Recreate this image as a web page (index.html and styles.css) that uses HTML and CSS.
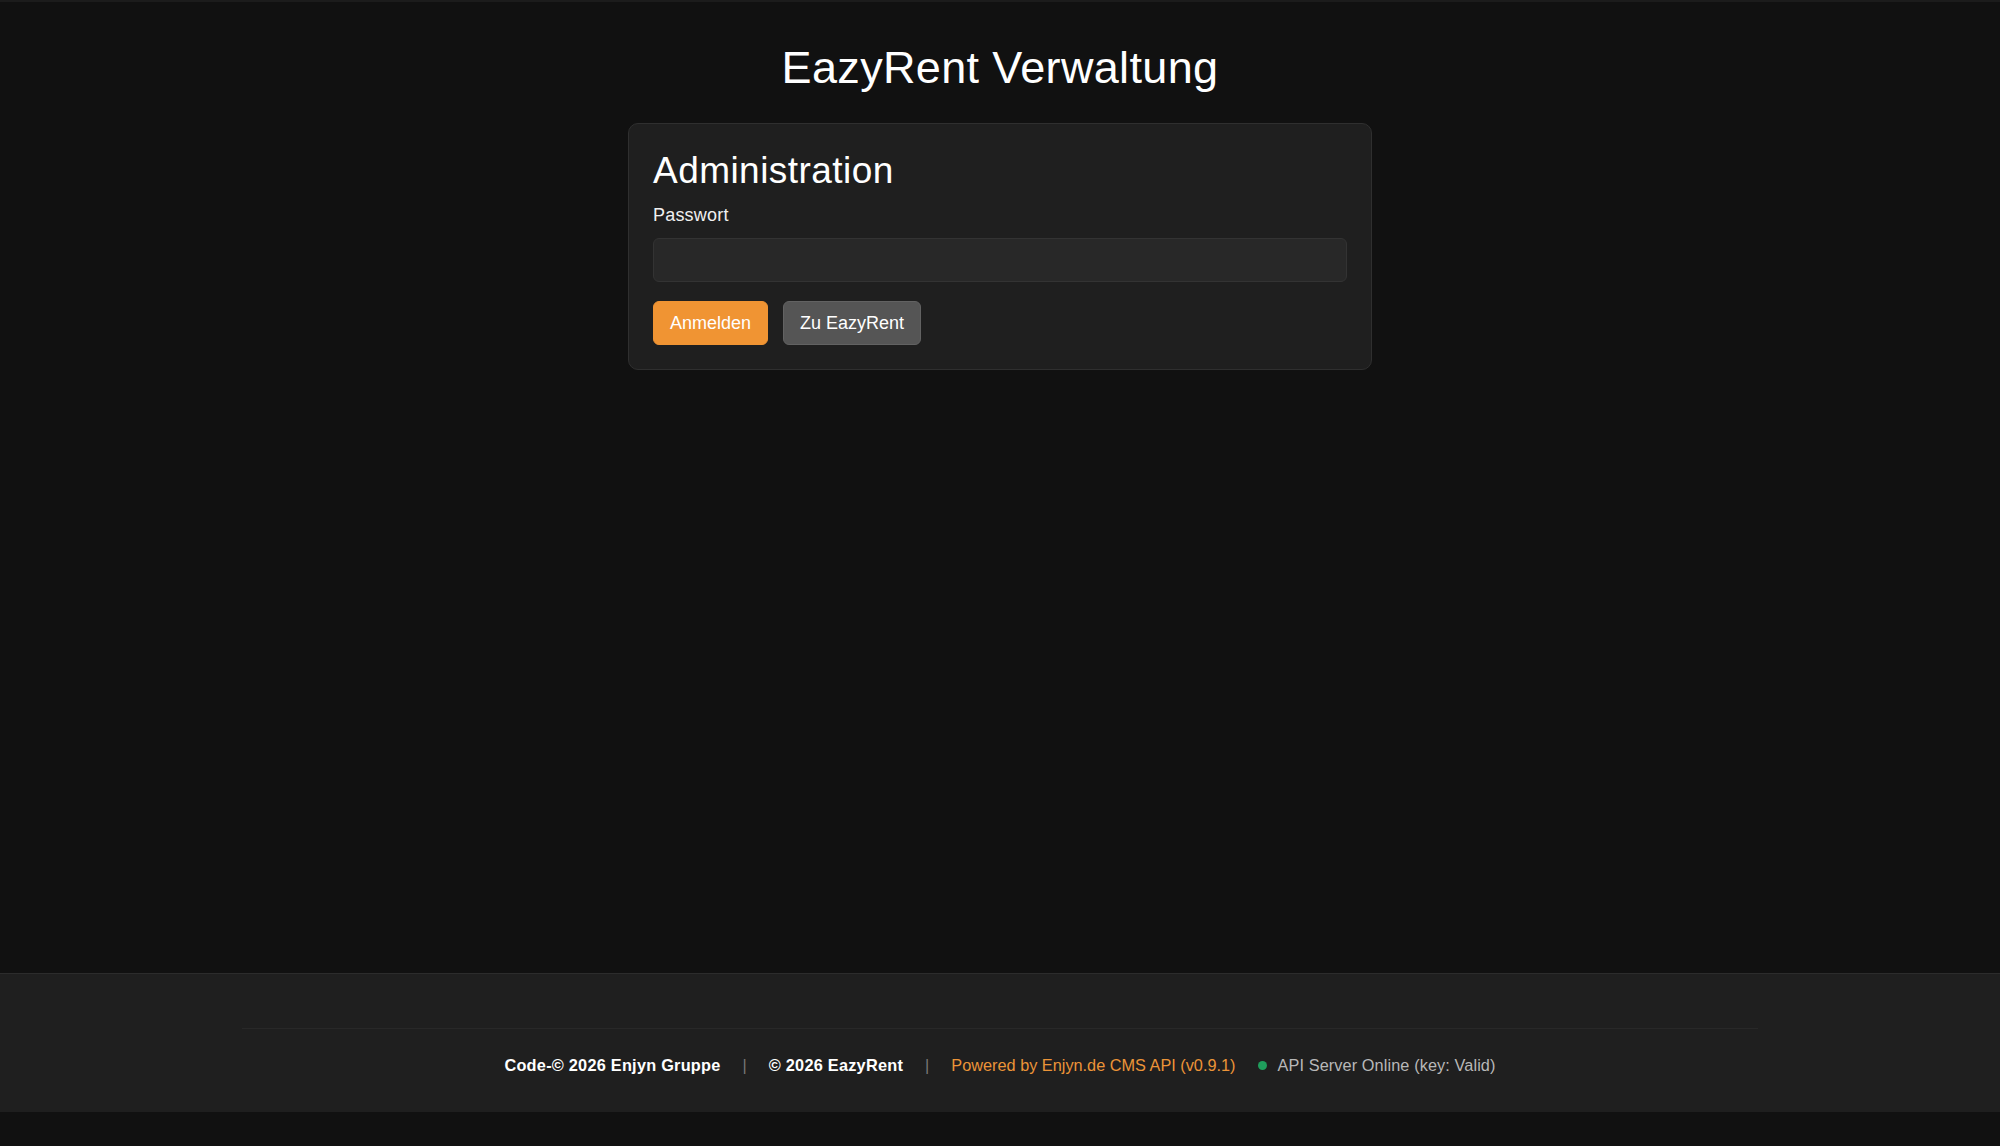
FILE: index.html
```html
<!DOCTYPE html>
<html lang="de">
<head>
<meta charset="utf-8">
<title>EazyRent Verwaltung</title>
<link rel="stylesheet" href="styles.css">
</head>
<body>
<div class="topstrip"></div>
<main class="main">
  <h1 class="title">EazyRent Verwaltung</h1>
  <section class="card">
    <h2 class="card-title">Administration</h2>
    <label class="label" for="pw">Passwort</label>
    <input class="input" id="pw" type="password">
    <div class="actions">
      <button class="btn btn-primary">Anmelden</button>
      <button class="btn btn-secondary">Zu EazyRent</button>
    </div>
  </section>
</main>
<footer class="footer">
  <div class="footer-inner">
    <span class="f-strong">Code-© 2026 Enjyn Gruppe</span>
    <span class="f-sep">|</span>
    <span class="f-strong">© 2026 EazyRent</span>
    <span class="f-sep">|</span>
    <span class="f-accent">Powered by Enjyn.de CMS API (v0.9.1)</span>
    <span class="f-status"><span class="dot"></span>API Server Online (key: Valid)</span>
  </div>
</footer>
</body>
</html>
```
FILE: styles.css
```css
html, body {
  margin: 0;
  padding: 0;
  background: #111111;
}
body {
  font-family: "Liberation Sans", Arial, sans-serif;
  font-size: 18px;
  color: #f2f2f2;
}
.topstrip {
  height: 2px;
  background: #1c1c1c;
}
.main {
  min-height: 971px;
  padding-top: 40px;
  box-sizing: border-box;
}
.title {
  margin: 0;
  font-size: 45px;
  line-height: 52px;
  font-weight: 400;
  letter-spacing: 0.35px;
  text-align: center;
  color: #ffffff;
}
.card {
  width: 744px;
  box-sizing: border-box;
  margin: 29px auto 0;
  padding: 25px 24px 24px;
  background: #1f1f1f;
  border: 1px solid #2f2f2f;
  border-radius: 10px;
}
.card-title {
  margin: 0;
  font-size: 37px;
  line-height: 44px;
  font-weight: 400;
  letter-spacing: 0.45px;
  color: #ffffff;
}
.label {
  display: block;
  margin-top: 11px;
  font-size: 18px;
  line-height: 22px;
  letter-spacing: 0.2px;
  color: #f0f0f0;
}
.input {
  display: block;
  width: 100%;
  height: 44px;
  box-sizing: border-box;
  margin-top: 12px;
  background: #282828;
  border: 1px solid #333333;
  border-radius: 6px;
  color: #eeeeee;
  font: inherit;
  padding: 0 12px;
  outline: none;
}
.actions {
  display: flex;
  gap: 15px;
  margin-top: 19px;
}
.btn {
  height: 44px;
  padding: 0 16px;
  font-family: inherit;
  font-size: 18px;
  border-radius: 6px;
  color: #ffffff;
  cursor: pointer;
}
.btn-primary {
  background: #f09433;
  border: 1px solid #f09433;
}
.btn-secondary {
  background: #555555;
  border: 1px solid #626262;
}
.footer {
  background: #1f1f1f;
  border-top: 1px solid #2c2c2c;
  padding-top: 54px;
  padding-bottom: 35px;
}
.footer-inner {
  width: 1516px;
  margin: 0 auto;
  border-top: 1px solid #282828;
  padding-top: 24px;
  display: flex;
  justify-content: center;
  align-items: center;
  gap: 22px;
  font-size: 16.3px;
  line-height: 24px;
}
.f-strong {
  font-weight: 700;
  letter-spacing: 0.25px;
  color: #ffffff;
}
.f-sep {
  color: #777777;
}
.f-accent {
  color: #ec9438;
}
.f-status {
  display: inline-flex;
  align-items: center;
  gap: 11px;
  color: #b8b8b8;
  letter-spacing: 0.1px;
}
.dot {
  width: 9px;
  height: 9px;
  border-radius: 50%;
  background: #1f9d5c;
}
```
